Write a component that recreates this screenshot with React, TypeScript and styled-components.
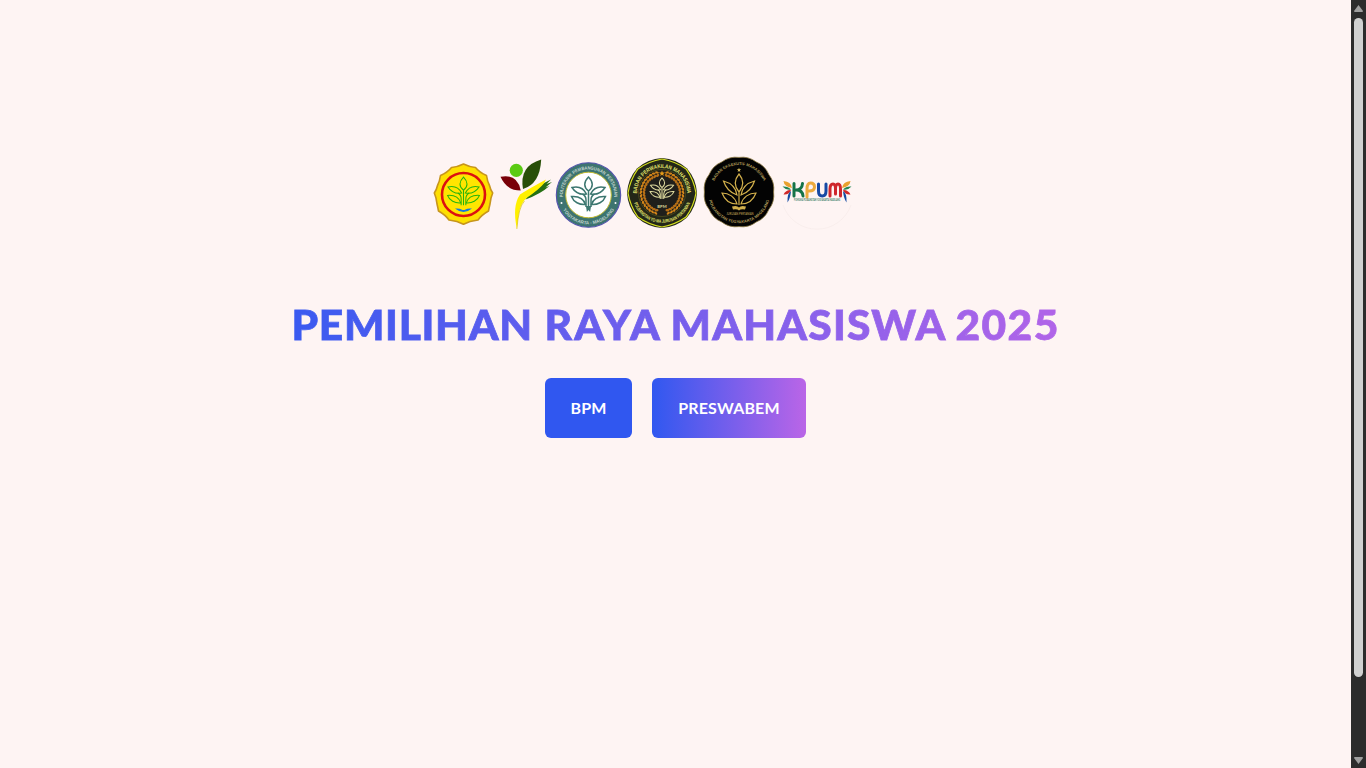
import React from 'react';
import styled, { createGlobalStyle } from 'styled-components';

const GlobalStyle = createGlobalStyle`
  body { margin: 0; background: #fef4f3; overflow: hidden; }
  * { box-sizing: border-box; }
`;

const Page = styled.div`
  display: flex;
  height: 768px;
  background: #fef4f3;
  font-family: Lato, 'Liberation Sans', sans-serif;
`;

const Hero = styled.main`
  flex: 1;
  display: flex;
  flex-direction: column;
  align-items: center;
  padding-top: 154px;
`;

const LogoRow = styled.div`
  display: flex;
  height: 80px;
  width: 488px;
`;

const Logo = styled.svg<{ $gap?: number }>`
  flex: none;
  display: block;
  height: 80px;
  margin-left: ${p => p.$gap ?? 0}px;
  overflow: visible;
`;

const Title = styled.h1`
  display: flex;
  margin: 63px 0 0;
  width: 768px;
  height: 54px;
  font-size: 42.5px;
  line-height: 53px;
  font-weight: 900;
  white-space: nowrap;
  color: transparent;
  -webkit-text-stroke: 0.8px transparent;
  background: linear-gradient(90deg, #3a5af0, #b164e8);
  background-clip: text;
  -webkit-background-clip: text;
`;

const Word = styled.span<{ $width: number; $spacing: number }>`
  flex: none;
  width: ${p => p.$width}px;
  letter-spacing: ${p => p.$spacing}px;
`;

const Actions = styled.div`
  display: flex;
  gap: 20px;
  margin-top: 27px;
`;

const Button = styled.button<{ $width: number; $gradient?: boolean }>`
  width: ${p => p.$width}px;
  height: 60px;
  padding: 0;
  border: 0;
  border-radius: 6px;
  color: #fff;
  font: 700 16px/60px Lato, 'Liberation Sans', sans-serif;
  letter-spacing: 0.15px;
  background: ${p => (p.$gradient ? 'linear-gradient(90deg, #3058f0, #ba65e7)' : '#3057f0')};
`;

const ScrollBar = styled.div`
  width: 15px;
  height: 768px;
  display: flex;
  flex-direction: column;
  align-items: center;
  background: #2c2c2c;
`;

const Arrow = styled.svg`
  display: block;
  flex: none;
  width: 15px;
  height: 18px;
`;

const Thumb = styled.div`
  width: 9px;
  height: 659px;
  margin-bottom: 73px;
  border-radius: 5px;
  background: #d1d1d1;
`;

const lobes = (n: number, r: number, bulge: number) => {
  const at = (a: number, d: number) => `${(Math.sin(a) * d).toFixed(2)} ${(-Math.cos(a) * d).toFixed(2)}`;
  const step = (Math.PI * 2) / n;
  let d = `M${at(0, r)}`;
  for (let i = 0; i < n; i++) d += `Q${at((i + 0.5) * step, bulge)} ${at((i + 1) * step, r)}`;
  return d + 'Z';
};

const Leaves = ({ scale = 1, y = 0, ...rest }: { scale?: number; y?: number } & React.SVGProps<SVGGElement>) => (
  <g fill="none" transform={`translate(0 ${y}) scale(${scale})`} {...rest}>
    <path d="M0-18C-5-13-5-8 0-4C5-8 5-13 0-18ZM0-4V12" />
    <path d="M-2-1C-5-7-10-9-16.5-7.5C-13-2-8 0-2-1ZM2-1C5-7 10-9 16.5-7.5C13-2 8 0 2-1Z" />
    <path d="M-3 9.5C-5 3-10 1-17 1.5C-15 7-9 10-3 9.5ZM3 9.5C5 3 10 1 17 1.5C15 7 9 10 3 9.5Z" />
    <path d="M-2.5 12V5Q-2.5 1-6-1M2.5 12V5Q2.5 1 6-1" />
  </g>
);

interface RingProps {
  id: string;
  top: string;
  bottom: string;
  r: number;
  rb: number;
  size: number;
  bottomSize?: number;
  fill: string;
  topSpan: number;
  bottomSpan: number;
}

const Ring = ({ id, top, bottom, r, rb, size, bottomSize, fill, topSpan, bottomSpan }: RingProps) => (
  <g fill={fill} fontSize={size} fontWeight="700" textAnchor="middle" fontFamily="'Liberation Sans', sans-serif">
    <path id={`${id}-t`} d={`M0 ${r}A${r} ${r} 0 0 1 0 ${-r}A${r} ${r} 0 0 1 0 ${r}`} fill="none" />
    <path id={`${id}-b`} d={`M0 ${-rb}A${rb} ${rb} 0 0 0 0 ${rb}A${rb} ${rb} 0 0 0 0 ${-rb}`} fill="none" />
    <text><textPath href={`#${id}-t`} startOffset="50%" textLength={r * topSpan} lengthAdjust="spacingAndGlyphs">{top}</textPath></text>
    <text fontSize={bottomSize ?? size}><textPath href={`#${id}-b`} startOffset="50%" textLength={rb * bottomSpan} lengthAdjust="spacingAndGlyphs">{bottom}</textPath></text>
  </g>
);

const star = 'M0-3L.8-.9L3-.9L1.2.4L1.8 2.6L0 1.3L-1.8 2.6L-1.2.4L-3-.9L-.8-.9Z';

const Ministry = () => (
  <Logo width="64" viewBox="-31.5 -40 64 80">
    <path d="M0-30Q6-27 12-26.5Q16-21.5 23-18.5Q24-12 26-8.5Q27-4 29.2-1Q27 4 26.5 10Q25.5 14 25 17Q18 21 14.5 26Q6 27 0 30.3Q-6 27-14.5 26Q-18 21-25 17Q-25.5 14-26.5 10Q-27 4-29.2-1Q-27-4-26-8.5Q-24-12-23-18.5Q-16-21.5-12-26.5Q-6-27 0-30Z" fill="#fedf00" stroke="#c7951c" strokeWidth="1.6" strokeLinejoin="round" />
    <circle cy=".5" r="21.5" fill="#ffe500" stroke="#dc1010" strokeWidth="2.6" />
    <Leaves stroke="#27b40c" strokeWidth="1.1" scale={0.94} y={0} />
    <path d="M-8.5 14.5Q-4 14-2 15.5Q0 16.7 2 15.5Q4 14 8.5 14.5Q0 21.5-8.5 14.5Z" fill="#1677dc" />
  </Logo>
);

const Sprout = () => (
  <Logo $gap={2} width="56" viewBox="498.5 154 56 80">
    <circle cx="516.8" cy="170.3" r="6.6" fill="#5bcb13" />
    <path d="M501 176.7Q518 173.5 521.2 190.5Q507 190.5 501 176.7Z" fill="#790008" />
    <path d="M541.7 159.5Q519.5 166 523.5 189Q540.5 184 541.7 159.5Z" fill="#284f08" />
    <path d="M526 199.5Q532 188 551.5 179.5L547 184L552.5 182L546 187.5L550 186Q541 194 526 199.5Z" fill="#267014" />
    <path d="M517.4 229Q512.5 206 520.5 194.5Q528 189.5 546.5 179.5Q545 185 532 194.5C520 202 519.8 209 517.4 229Z" fill="#fff000" />
    <path d="M517.4 229Q519 207 525 201" fill="none" stroke="#d4b900" strokeWidth=".6" />
  </Logo>
);

const Polytechnic = () => (
  <Logo $gap={0} width="68" viewBox="-34.5 -41 68 80">
    <circle r="32.2" fill="#3d7470" stroke="#5352ae" strokeWidth="1.1" />
    <circle r="22.8" fill="#fff" stroke="#c2bb32" strokeWidth="1" />
    <Ring id="poly" top="POLITEKNIK PEMBANGUNAN PERTANIAN" bottom="YOGYAKARTA - MAGELANG" r={25.6} rb={29.4} size={4.6} topSpan={3.3} bottomSpan={2.1} fill="#c2d4ce" />
    <circle cx="-27" cy="8" r="1" fill="#fff" /><circle cx="27" cy="8" r="1" fill="#fff" />
    <Leaves stroke="#3c7770" strokeWidth="1.5" y={0} />
    <path d="M-2.6 11L-1.6 17L0 15L1.6 17L2.6 11Z" fill="#3c7770" />
  </Logo>
);

const wreath = Array.from({ length: 17 }, (_, i) => 16 + i * 9.3);

const Council = () => (
  <Logo $gap={4} width="72" viewBox="-36 -39 72 80">
    <path d={lobes(8, 35, 37)} fill="#232718" />
    <path d={lobes(8, 34, 34.4)} fill="none" stroke="#d5df20" strokeWidth="1.2" />
    <circle r="23.5" fill="#201f1b" stroke="#6e6b20" strokeWidth=".5" />
    <Ring id="council" top="BADAN PERWAKILAN MAHASISWA" bottom="POLBANGTAN YO-MA JURUSAN PERTANIAN" r={25} rb={29.8} size={5.6} bottomSize={4.8} topSpan={3.15} bottomSpan={2.45} fill="#e3e66e" />
    {[-1, 1].map(side => (
      <g key={side} transform={`scale(${side} 1)`} fill="#d28518">
        {wreath.map(a => (
          <g key={a} transform={`rotate(${a}) translate(0 -19.4)`}>
            <ellipse cy="-1.9" rx="1.9" ry="1.1" transform="rotate(-25)" />
            <ellipse cy="1.5" rx="1.9" ry="1.2" transform="rotate(25)" fill="#b87017" />
          </g>
        ))}
      </g>
    ))}
    <path d={star} transform="translate(0 -19.5)" fill="#e79c18" />
    <Leaves stroke="#e0dca0" strokeWidth="1.5" scale={0.7} y={-2.5} />
    <text y="14.5" textAnchor="middle" fontSize="4.2" fontWeight="700" fill="#ded99c">BPM</text>
  </Logo>
);

const Executive = () => (
  <Logo $gap={4} width="74" viewBox="-37 -38 74 80">
    <path d={lobes(12, 34.6, 37.2)} fill="#030303" stroke="#8c7840" strokeWidth=".8" />
    <Ring id="exec" top="BADAN EKSEKUTIF MAHASISWA" bottom="POLBANGTAN YOGYAKARTA MAGELANG" r={27} rb={31.2} size={4} topSpan={2.3} bottomSpan={2.6} fill="#b29d5a" />
    <path d={star} transform="translate(0 -22) scale(.75)" fill="#dec15c" />
    <g fill="none" stroke="#d2b04c" strokeWidth="1.2">
      <path d="M0-18C-5-12-5-6 0 0C5-6 5-12 0-18ZM0 0V13" />
      <path d="M-2 3C-3-4-8-9-15.5-11C-13-3-8 1-2 3ZM2 3C3-4 8-9 15.5-11C13-3 8 1 2 3Z" />
      <path d="M-2 12C-4 5-10 1-17 1C-14 9-8 12-2 12ZM2 12C4 5 10 1 17 1C14 9 8 12 2 12Z" />
    </g>
    <path d="M-7 14.5Q-2 13 0 15.5Q2 13 7 14.5L6 17.5Q2 16.5 0 18.5Q-2 16.5-6 17.5Z" fill="#d2b04c" />
    <text x="1" y="22.5" textAnchor="middle" fontSize="2.8" textLength="27" lengthAdjust="spacingAndGlyphs" fill="#c8ad5c">JURUSAN PERTANIAN</text>
  </Logo>
);

const Wing = ({ flip = false }: { flip?: boolean }) => (
  <g transform={flip ? 'scale(-1 1)' : undefined}>
    <path d="M-33.5-13Q-26-12.5-25-6Q-33-7.5-33.5-13Z" fill="#e9a12d" />
    <path d="M-34.5-7.5Q-29-8-26-4.5Q-31-3.5-34.5-7.5Z" fill="#218451" />
    <path d="M-33.5 .5Q-31-4.5-26-4Q-28 1-33.5 .5Z" fill="#d12929" />
    <path d="M-29.5 8.5Q-30-1-26-3Q-26.5 4-29.5 8.5Z" fill="#174ca3" />
  </g>
);

const Commission = () => (
  <Logo $gap={4} width="76" viewBox="-37 -40 76 80">
    <path d="M-34 11A36 36 0 0 0 34 11" fill="none" stroke="#f5e9e7" strokeWidth=".6" />
    <Wing /><Wing flip />
    <g fill="none" strokeWidth="3" strokeLinecap="round" strokeLinejoin="round">
      <path d="M-23-10.5V2M-14.5-10.5Q-15-4-21-4Q-14.5-4-14 2" stroke="#157348" />
      <path d="M-10 3V-5Q-10-11-6.5-11Q-2.5-11-2.5-7Q-2.5-3-8-3" stroke="#edaa3d" />
      <path d="M1.5-10V-3Q1.5 2 5.2 2Q9 2 9-3V-10" stroke="#1649a4" />
      <path d="M13 2V-5Q13-10 16-10Q18.5-10 18.5-5V0V-5Q18.5-10 21-10Q23.5-10 23.5-5V2" stroke="#cf262c" />
    </g>
    <text y="7" textAnchor="middle" fontSize="2.8" fontWeight="700" textLength="46" lengthAdjust="spacingAndGlyphs" fill="#3b7d66">POMILWA POLBANGTAN YOGYAKARTA MAGELANG</text>
  </Logo>
);

export default function App() {
  return (
    <Page>
      <GlobalStyle />
      <Hero>
        <LogoRow>
          <Ministry /><Sprout /><Polytechnic /><Council /><Executive /><Commission />
        </LogoRow>
        <Title>
          <Word $width={253} $spacing={0.7}>PEMILIHAN</Word>
          <Word $width={126} $spacing={2.2}>RAYA</Word>
          <Word $width={285} $spacing={1.2}>MAHASISWA</Word>
          <Word $width={104} $spacing={1.4}>2025</Word>
        </Title>
        <Actions>
          <Button $width={87}>BPM</Button>
          <Button $width={154} $gradient>PRESWABEM</Button>
        </Actions>
      </Hero>
      <ScrollBar>
        <Arrow viewBox="0 0 15 18"><path d="M7.5 5L12 11Q12 12 11 12H4Q3 12 3 11Z" fill="#9f9f9f" /></Arrow>
        <Thumb />
        <Arrow viewBox="0 0 15 18"><path d="M7.5 14L12 8Q12 7 11 7H4Q3 7 3 8Z" fill="#9f9f9f" /></Arrow>
      </ScrollBar>
    </Page>
  );
}
